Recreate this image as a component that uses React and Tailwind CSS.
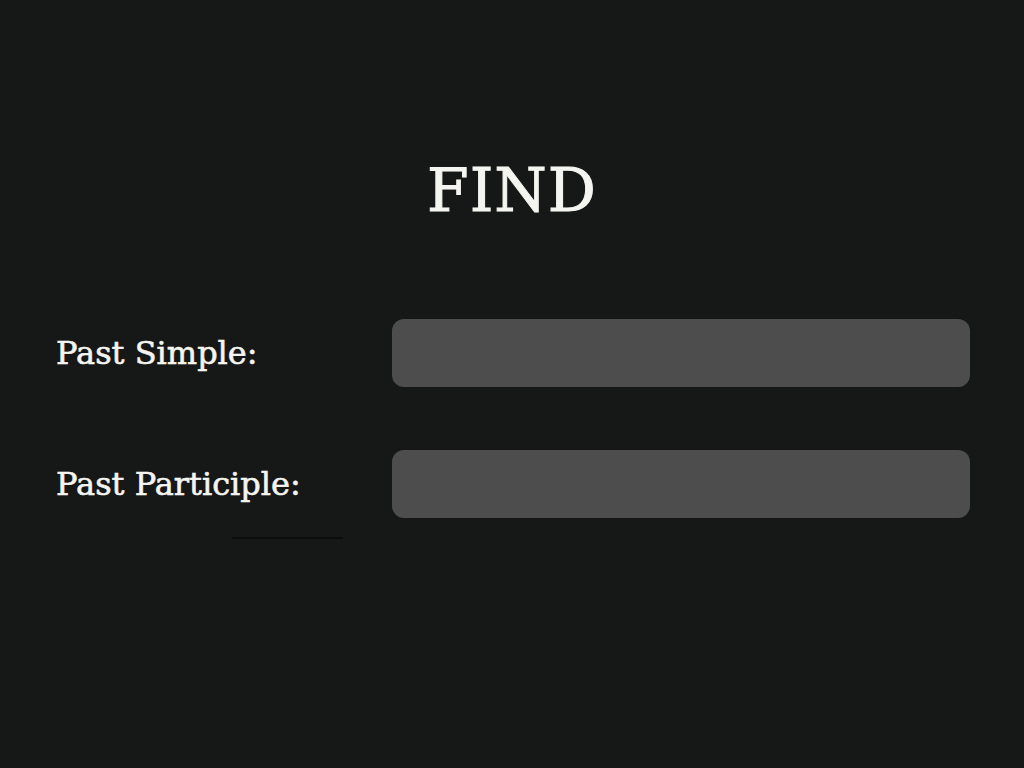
export default function App() {
  const fields = ['Past Simple:', 'Past Participle:']

  return (
    <div className="w-[1024px] h-[768px] bg-[#161817] text-[#f4f4f0] overflow-hidden" style={{ fontFamily: '"DejaVu Serif", serif' }}>
      <h1 className="pt-[158px] text-center text-[60px] leading-[64px] tracking-[1px] [-webkit-text-stroke:1px_#f4f4f0]">FIND</h1>
      <div className="mt-[97px] flex flex-col gap-[63px] pl-[56px] pr-[54px]">
        {fields.map((label, i) => (
          <div key={label} className="relative flex items-center">
            <div className="w-[336px] text-[32px] [-webkit-text-stroke:0.6px_#f4f4f0]">{label}</div>
            <input className="flex-1 h-[68px] rounded-[12px] bg-[#4d4d4d] outline-none px-4 text-[24px]" />
            {i === 1 && <div className="absolute left-[176px] top-[87px] w-[111px] h-[2px] bg-[#0b0c0c]" />}
          </div>
        ))}
      </div>
    </div>
  )
}
